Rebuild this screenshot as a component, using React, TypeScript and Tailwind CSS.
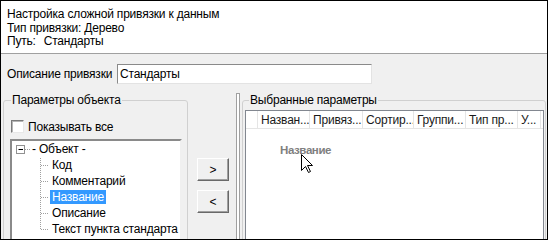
import React from "react";

const cols = [
  { w: "w-[52px]", t: "Назван..." },
  { w: "w-[53px]", t: "Привяз..." },
  { w: "w-[51px]", t: "Сортир..." },
  { w: "w-[52px]", t: "Группи..." },
  { w: "w-[52px]", t: "Тип пр..." },
  { w: "w-[23px]", t: "У..." },
];

const children = ["Код", "Комментарий", "Название", "Описание", "Текст пункта стандарта"];

export default function App() {
  return (
    <div className="relative w-[548px] h-[240px] border border-black bg-[#f0f0f0] flex flex-col overflow-hidden text-[12px] tracking-[-0.2px] text-black font-['Liberation_Sans',Arial,sans-serif]">
      {/* header */}
      <div className="bg-white h-[53px] shrink-0 border-b border-[#a0a0a0] pl-[6px] pt-[7px] leading-[13.5px]">
        <div>Настройка сложной привязки к данным</div>
        <div>Тип привязки: Дерево</div>
        <div>
          Путь:<span className="ml-[8px]">Стандарты</span>
        </div>
      </div>

      {/* description row */}
      <div className="mt-[10px] h-[20px] shrink-0 flex items-center pl-[6px]">
        <div className="w-[110px]">Описание привязки</div>
        <div className="w-[255px] h-[20px] bg-white border border-t-[#8a8a8a] border-l-[#8a8a8a] border-r-[#e3e3e3] border-b-[#e3e3e3] flex items-center pl-[2px]">
          Стандарты
        </div>
      </div>

      {/* bottom area */}
      <div className="mt-[9px] flex items-start h-[200px] shrink-0">
        {/* left group */}
        <fieldset className="ml-[2px] w-[185px] h-[190px] border border-[#d0d0d0] rounded-[3px] pl-[6px] shrink-0">
          <legend className="ml-[1px] px-[1px] leading-[14px]">Параметры объекта</legend>
          <div className="mt-[13px] ml-[1px] h-[13px] flex items-center gap-[4px]">
            <span className="w-[13px] h-[13px] bg-white border border-t-[#7a7a7a] border-l-[#7a7a7a] border-r-[#e8e8e8] border-b-[#e8e8e8] shadow-[inset_1px_1px_0_#b5b5b5]" />
            <span>Показывать все</span>
          </div>
          <div className="mt-[6px] w-[172px] h-[110px] bg-white border-2 border-t-[#8a8a8a] border-l-[#8a8a8a] border-r-[#f0f0f0] border-b-[#f0f0f0] overflow-hidden">
            <div className="relative">
              <svg className="absolute left-0 top-0" width="170" height="100" viewBox="0 0 170 100">
                <rect x="4.5" y="4.5" width="8" height="8" fill="white" stroke="#919191" />
                <line x1="6.5" y1="8.5" x2="11" y2="8.5" stroke="#000" />
                <line x1="13" y1="8.5" x2="19" y2="8.5" stroke="#a0a0a0" strokeDasharray="1 1" />
                <line x1="28.5" y1="17" x2="28.5" y2="89" stroke="#a0a0a0" strokeDasharray="1 1" />
                {[24, 40, 56, 72, 88].map((y) => (
                  <line key={y} x1="29" y1={y + 0.5} x2="37" y2={y + 0.5} stroke="#a0a0a0" strokeDasharray="1 1" />
                ))}
              </svg>
              <div className="h-[16px] flex items-center pl-[20px] whitespace-nowrap">- Объект -</div>
              {children.map((c) => (
                <div key={c} className="h-[16px] flex items-center pl-[38px] whitespace-nowrap">
                  <span
                    className={
                      c === "Название"
                        ? "px-[2px] leading-[14px] bg-[#3399ff] text-white"
                        : "px-[2px] leading-[14px]"
                    }
                  >
                    {c}
                  </span>
                </div>
              ))}
            </div>
          </div>
        </fieldset>

        {/* buttons */}
        <div className="ml-[9px] flex flex-col shrink-0">
          <div className="mt-[65px] w-[32px] h-[23px] flex items-center justify-center bg-[#f0f0f0] border border-t-white border-l-white border-r-[#696969] border-b-[#696969] shadow-[inset_-1px_-1px_0_#a0a0a0]">
            &gt;
          </div>
          <div className="mt-[9px] w-[32px] h-[23px] flex items-center justify-center bg-[#f0f0f0] border border-t-white border-l-white border-r-[#696969] border-b-[#696969] shadow-[inset_-1px_-1px_0_#a0a0a0]">
            &lt;
          </div>
        </div>

        {/* splitter */}
        <div className="ml-[7px] w-[4px] h-[200px] shrink-0 border-l border-t border-[#a0a0a0] border-r border-r-[#a0a0a0] bg-white" />

        {/* right group */}
        <fieldset className="ml-[2px] w-[304px] h-[190px] border border-[#d0d0d0] rounded-[3px] pl-[2px] pr-[1px] shrink-0">
          <legend className="ml-[4px] px-[1px] leading-[14px]">Выбранные параметры</legend>
          <div className="mt-[3px] h-[140px] bg-white border border-[#828790]">
            <div className="h-[18px] flex border-b border-[#e5e5e5]">
              <div className="w-[12px] h-full border-r border-[#e5e5e5]" />
              {cols.map((c) => (
                <div key={c.t} className={`${c.w} h-full border-r border-[#e5e5e5] pl-[3px] flex items-center whitespace-nowrap overflow-hidden text-[#1a1a1a]`}>
                  {c.t}
                </div>
              ))}
            </div>
          </div>
        </fieldset>
      </div>

      {/* dragged ghost text */}
      <div className="absolute left-[279px] top-[142px] leading-[14px] text-[11.5px] font-bold text-[#808080] tracking-[-0.4px]">
        Название
      </div>
      {/* cursor */}
      <svg className="absolute left-[300px] top-[153px]" width="13" height="20" viewBox="0 0 13 20">
        <path d="M0.5 0.5 L0.5 16.5 L4.5 12.5 L7.5 18.5 L9.5 17.5 L6.5 11.5 L11.5 11.5 Z" fill="white" stroke="black" strokeLinejoin="miter" />
      </svg>
    </div>
  );
}
